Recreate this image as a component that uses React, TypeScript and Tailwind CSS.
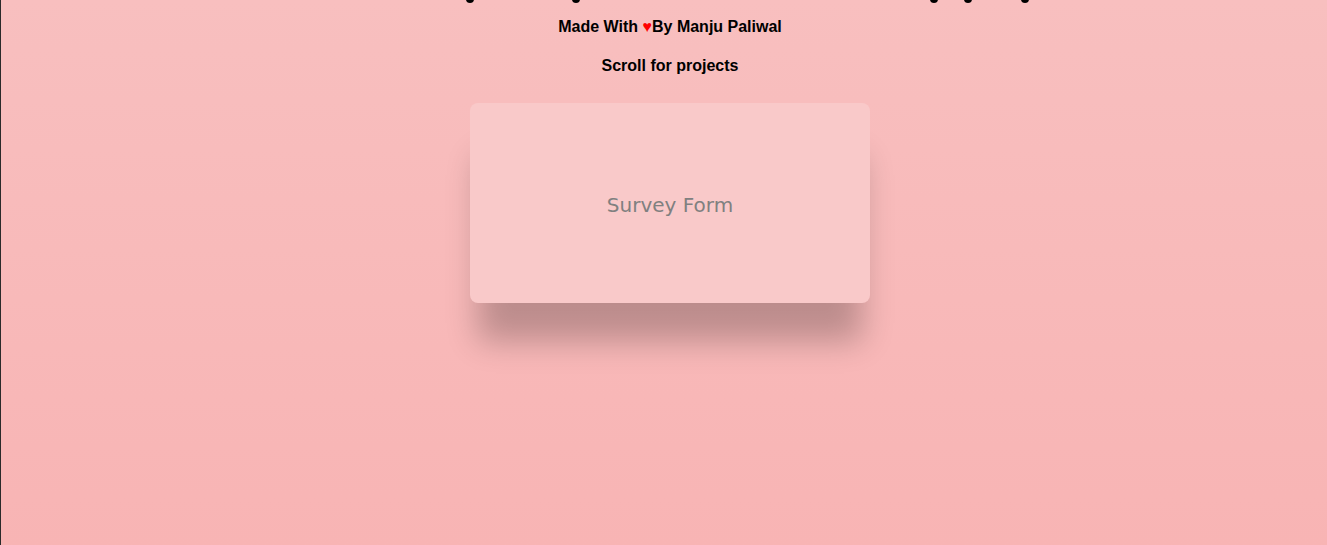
export default function App() {
  const dots = [469, 575, 933, 967, 1024];
  return (
    <div className="relative h-[545px] w-full overflow-hidden border-l border-[#2a2a2a] bg-gradient-to-b from-[#f8bfbf] to-[#f8b4b4] font-['Liberation_Sans',sans-serif]">
      {/* tails of the heading scrolled out of view */}
      {dots.map((x) => (
        <span
          key={x}
          className="absolute top-[-5px] h-[8px] w-[8px] rounded-full bg-black"
          style={{ left: x - 4 }}
        />
      ))}
      <div className="flex flex-col items-center pl-[12px] pt-[17px]">
        <p className="text-[16px] font-bold leading-[20px] text-black">
          Made With <span className="text-[#ff0000]">♥</span>By Manju Paliwal
        </p>
        <p className="mt-[19px] text-[16px] font-bold leading-[20px] text-black">Scroll for projects</p>
        <div className="mt-[27px] flex h-[200px] w-[400px] items-center justify-center rounded-[8px] bg-[#f9c9c9] pt-[4px] shadow-[0_46px_30px_-8px_rgba(0,0,0,0.24)]">
          <span className="font-['DejaVu_Sans',sans-serif] text-[20px] text-[#808080]">Survey Form</span>
        </div>
      </div>
    </div>
  );
}
